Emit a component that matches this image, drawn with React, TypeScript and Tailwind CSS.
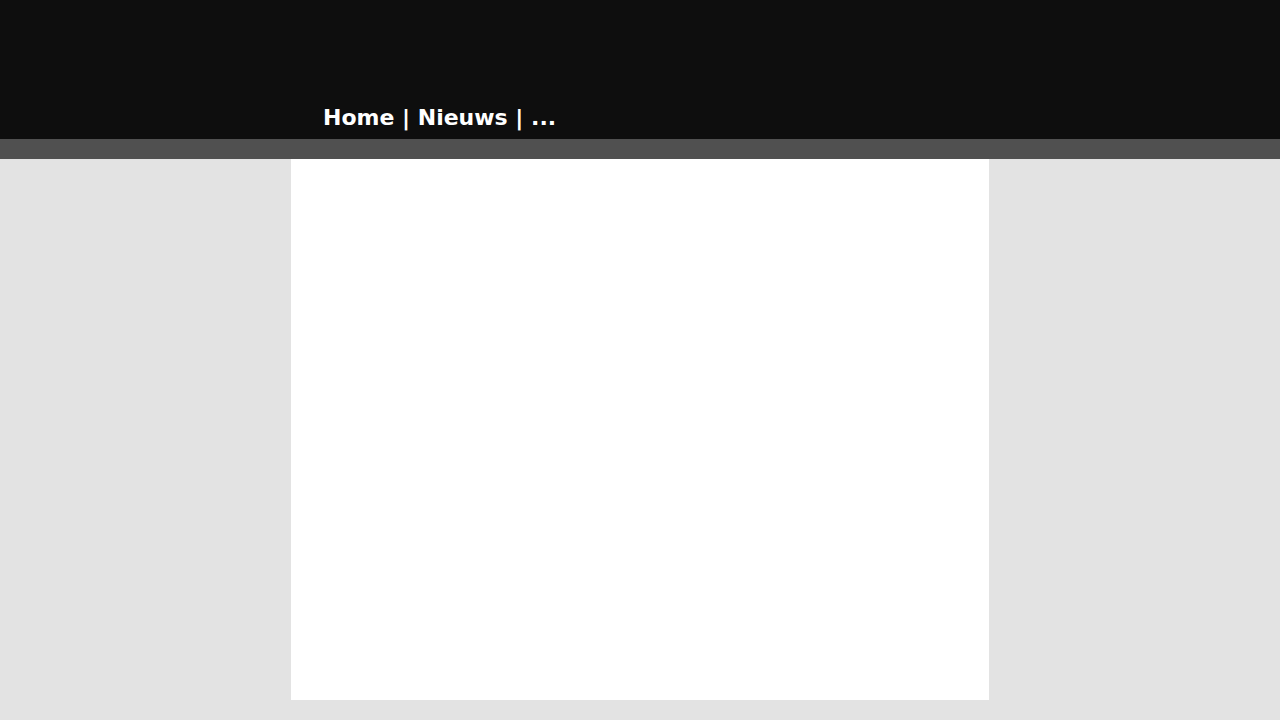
export default function App() {
  return (
    <div className="min-h-[720px] bg-[#e3e3e3] flex flex-col">
      <header className="h-[139px] bg-[#0e0e0e]">
        <div className="mx-auto w-[698px] h-full flex items-end pb-[6px] pl-[32px]">
          <nav className="text-white font-bold text-[22px] leading-[30px] [font-family:'DejaVu_Sans',sans-serif]">
            Home | Nieuws | ...
          </nav>
        </div>
      </header>
      <div className="h-[20px] bg-[#505050]" />
      <main className="mx-auto w-[698px] h-[541px] bg-white" />
    </div>
  );
}
